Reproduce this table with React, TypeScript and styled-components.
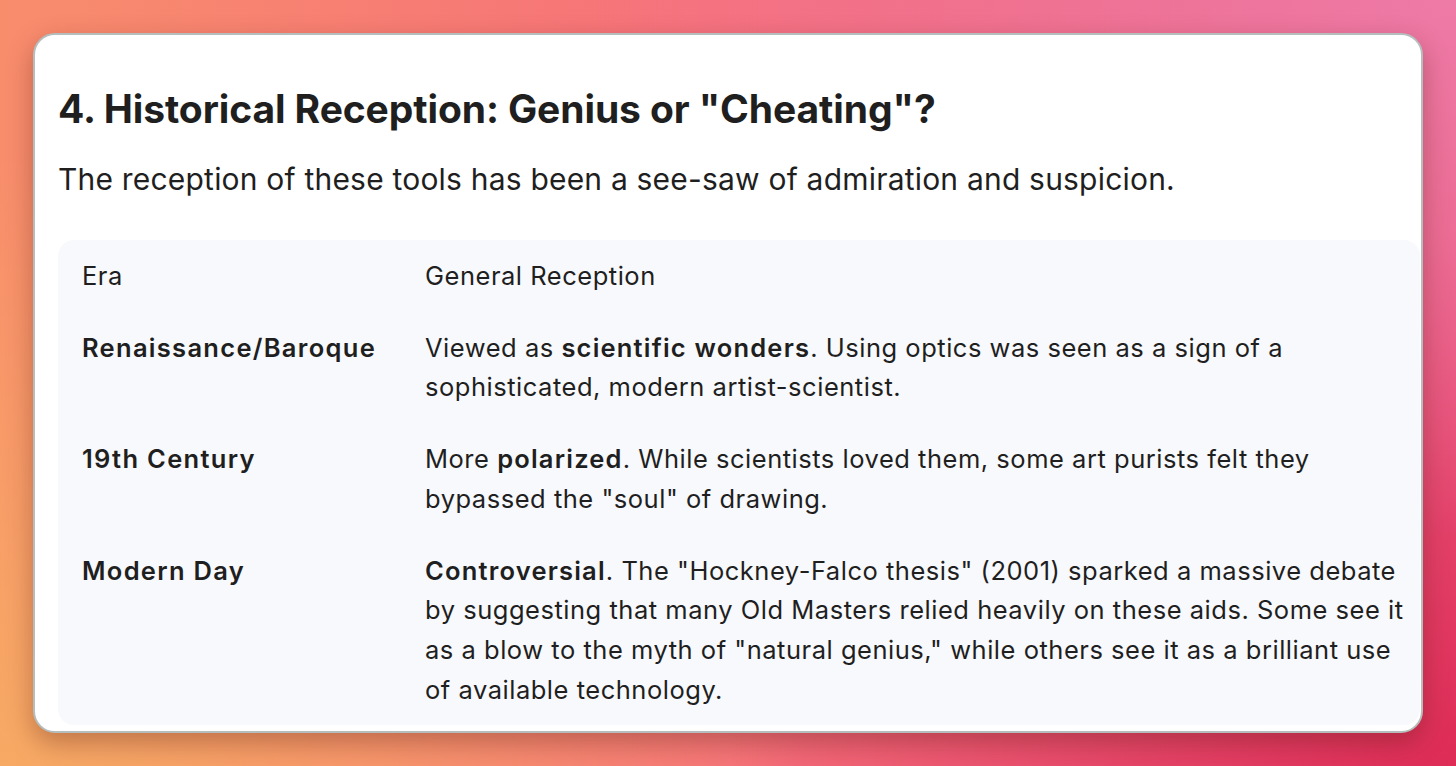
import React from "react";
import styled, { createGlobalStyle } from "styled-components";

const GlobalStyle = createGlobalStyle`
  html, body {
    margin: 0;
    padding: 0;
  }
  body {
    width: 1456px;
    height: 766px;
    overflow: hidden;
    background:
      radial-gradient(ellipse 60% 70% at 100% 0%, rgba(238, 126, 170, 0.9) 0%, rgba(238, 126, 170, 0) 100%),
      radial-gradient(ellipse 55% 80% at 0% 100%, rgba(247, 170, 100, 1) 0%, rgba(247, 170, 100, 0) 100%),
      radial-gradient(ellipse 50% 70% at 100% 100%, rgba(222, 44, 86, 1) 0%, rgba(222, 44, 86, 0) 100%),
      linear-gradient(90deg, #f88d6c 0%, #f6707a 50%, #ea5a80 100%);
    font-family: Inter, "Noto Sans", sans-serif;
    color: #1f1f1f;
  }
`;

const Page = styled.div`
  box-sizing: border-box;
  width: 1456px;
  height: 766px;
  padding: 33px;
`;

const Card = styled.section`
  box-sizing: border-box;
  width: 1390px;
  height: 700px;
  background: #ffffff;
  border: 2px solid #b6bdbd;
  border-radius: 22px;
  box-shadow: 0 10px 26px rgba(90, 30, 20, 0.35);
  overflow: hidden;
  padding: 50px 0 0 23px;
`;

const Heading = styled.h2`
  margin: 0;
  font-size: 39px;
  line-height: 48px;
  font-weight: 650;
  letter-spacing: -0.1px;
`;

const Lead = styled.p`
  margin: 26px 0 0 0;
  font-size: 30px;
  line-height: 40px;
  font-weight: 400;
  letter-spacing: 0.2px;
`;

const TableBox = styled.div`
  margin: 41px 1px 0 0;
  background: #f8f9fc;
  border-radius: 16px;
`;

const Table = styled.table`
  width: 100%;
  border-collapse: collapse;
  font-size: 25.5px;
  line-height: 39.7px;
  letter-spacing: 0.52px;
`;

const Cell = styled.td<{ $first?: boolean }>`
  vertical-align: top;
  padding: 16px ${(p) => (p.$first ? "20px" : "6px")} 16px ${(p) => (p.$first ? "24px" : "0")};
  width: ${(p) => (p.$first ? "323px" : "auto")};
  font-weight: ${(p) => (p.$first ? 600 : 400)};
  letter-spacing: ${(p) => (p.$first ? "1.3px" : "0.52px")};
`;

const HeadCell = styled.th<{ $first?: boolean }>`
  text-align: left;
  font-weight: 400;
  padding: 16px ${(p) => (p.$first ? "20px" : "6px")} 16px ${(p) => (p.$first ? "24px" : "0")};
  width: ${(p) => (p.$first ? "323px" : "auto")};
`;

const Strong = styled.b`
  font-weight: 600;
  letter-spacing: 1.2px;
`;

const rows: { era: string; body: React.ReactNode }[] = [
  {
    era: "Renaissance/Baroque",
    body: (
      <>
        Viewed as <Strong>scientific wonders</Strong>. Using optics was seen as a sign of a sophisticated, modern
        artist-scientist.
      </>
    ),
  },
  {
    era: "19th Century",
    body: (
      <>
        More <Strong>polarized</Strong>. While scientists loved them, some art purists felt they bypassed the "soul"
        of drawing.
      </>
    ),
  },
  {
    era: "Modern Day",
    body: (
      <>
        <Strong>Controversial</Strong>. The "Hockney-Falco thesis" (2001) sparked a massive debate by suggesting
        that many Old Masters relied heavily on these aids. Some see it as a blow to the myth of "natural genius,"
        while others see it as a brilliant use of available technology.
      </>
    ),
  },
];

export default function App() {
  return (
    <>
      <GlobalStyle />
      <Page>
        <Card>
          <Heading>4. Historical Reception: Genius or "Cheating"?</Heading>
          <Lead>The reception of these tools has been a see-saw of admiration and suspicion.</Lead>
          <TableBox>
            <Table>
              <thead>
                <tr>
                  <HeadCell $first>Era</HeadCell>
                  <HeadCell>General Reception</HeadCell>
                </tr>
              </thead>
              <tbody>
                {rows.map((r) => (
                  <tr key={r.era}>
                    <Cell $first>{r.era}</Cell>
                    <Cell>{r.body}</Cell>
                  </tr>
                ))}
              </tbody>
            </Table>
          </TableBox>
        </Card>
      </Page>
    </>
  );
}
